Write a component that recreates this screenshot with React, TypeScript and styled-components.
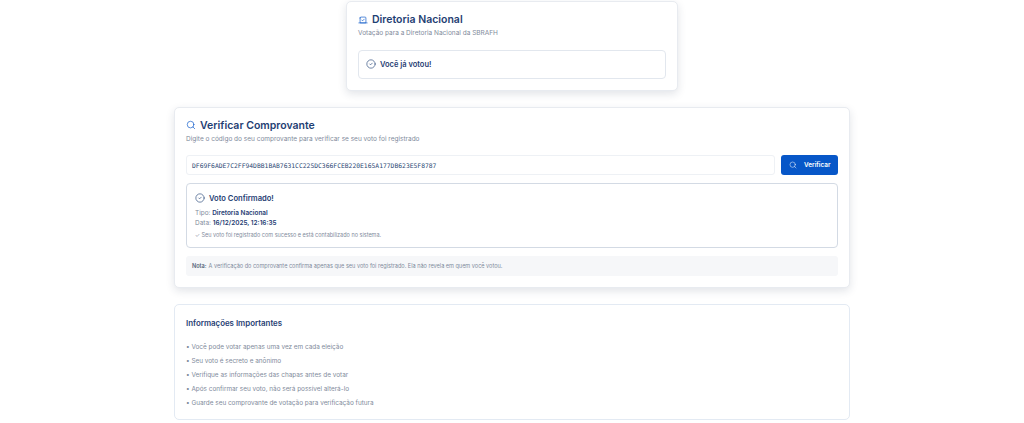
import styled, {createGlobalStyle} from "styled-components";
import {CircleCheck, Search, Vote} from "lucide-react";

const GlobalStyle = createGlobalStyle`
  html, body {
    margin: 0;
    padding: 0;
    background: #ffffff;
    font-family: Inter, "DejaVu Sans", "Liberation Sans", sans-serif;
  }
  * {
    box-sizing: border-box;
  }
`

const Page = styled.div`
  width: 1024px;
  height: 423px;
  overflow: hidden;
  padding-top: 1px;
  display: flex;
  flex-direction: column;
  align-items: center;
  gap: 16px;
`
const Card = styled.section<{$wide?: boolean; $flat?: boolean}>`
  width: ${({$wide}) => ($wide ? "676px" : "332px")};
  padding: 11px;
  background: #fff;
  border: 1px solid ${({$flat}) => ($flat ? "#e3eaf3" : "#e8ebf0")};
  border-radius: 5px;
  box-shadow: ${({$flat}) => ($flat ? "none" : "0 3px 9px rgba(30, 50, 80, 0.13)")};
`
const Title = styled.h2`
  margin: 0;
  display: flex;
  align-items: center;
  gap: 4px;
  height: 13px;
  font-size: 10.5px;
  font-weight: 600;
  color: #1f4073;
  white-space: nowrap;

  svg {
    color: #0b57c9;
    flex: none;
  }
`
const SubTitle = styled.p`
  margin: 2px 0 0;
  font-size: 6.5px;
  line-height: 10px;
  color: #7f8b9c;
`
const VotedBox = styled.div`
  margin-top: 12px;
  height: 28.5px;
  padding: 0 7px;
  display: flex;
  align-items: center;
  gap: 4px;
  border: 1px solid #e2e7ee;
  border-radius: 4px;
  font-size: 7.5px;
  font-weight: 600;
  color: #1f4073;
`
const VerifyRow = styled.div`
  margin-top: 11.5px;
  display: flex;
  gap: 6px;
`
const CodeInput = styled.div`
  flex: 1;
  height: 20px;
  padding: 0 5px;
  display: flex;
  align-items: center;
  border: 1px solid #eef1f5;
  border-radius: 3px;
  font-family: "DejaVu Sans Mono", "Liberation Mono", monospace;
  font-size: 6.35px;
  color: #2d4a75;
  white-space: nowrap;
`
const VerifyButton = styled.button`
  width: 57px;
  height: 20px;
  padding: 0 0 0 8px;
  display: flex;
  align-items: center;
  gap: 7px;
  border: 0;
  border-radius: 3px;
  background: #0757c8;
  color: #fff;
  font-family: inherit;
  font-size: 6.4px;
  font-weight: 600;
`
const ResultBox = styled.div`
  margin-top: 8px;
  height: 65px;
  padding: 8px 8px 0;
  border: 1px solid #d3dae4;
  border-radius: 4px;
`
const ResultTitle = styled.div`
  display: flex;
  align-items: center;
  gap: 4px;
  height: 12px;
  font-size: 7.6px;
  font-weight: 600;
  color: #1f4073;
`
const ResultLines = styled.div`
  margin-top: 4px;
  font-size: 6.45px;
  line-height: 10px;
  color: #7f8b9c;

  strong {
    font-weight: 600;
    color: #1f4073;
  }
`
const ResultFoot = styled.p`
  margin: 3px 0 0;
  font-size: 5.5px;
  line-height: 9px;
  color: #7f8b9c;
`
const Note = styled.div`
  margin-top: 8px;
  height: 20px;
  padding: 0 6px;
  display: flex;
  align-items: center;
  gap: 2px;
  border-radius: 3px;
  background: #f6f7f9;
  font-size: 5.55px;
  color: #7f8b9c;

  strong {
    font-weight: 600;
    color: #556478;
  }
`
const InfoTitle = styled.h3`
  margin: 0;
  font-size: 7.9px;
  line-height: 14px;
  font-weight: 600;
  color: #1f4073;
`
const InfoList = styled.ul`
  margin: 12px 0 0;
  padding: 0;
  list-style: none;
  display: flex;
  flex-direction: column;
  gap: 4px;
`
const InfoItem = styled.li`
  font-size: 6.4px;
  line-height: 10px;
  color: #7f8b9c;
`

const tips = [
    "Você pode votar apenas uma vez em cada eleição",
    "Seu voto é secreto e anônimo",
    "Verifique as informações das chapas antes de votar",
    "Após confirmar seu voto, não será possível alterá-lo",
    "Guarde seu comprovante de votação para verificação futura",
];

export default function App() {
    return (
        <>
            <GlobalStyle/>
            <Page>
                <Card>
                    <Title><Vote size={10} strokeWidth={1.6}/>Diretoria Nacional</Title>
                    <SubTitle>Votação para a Diretoria Nacional da SBRAFH</SubTitle>
                    <VotedBox><CircleCheck size={10} strokeWidth={1.5}/>Você já votou!</VotedBox>
                </Card>
                <Card $wide>
                    <Title><Search size={10} strokeWidth={1.6}/>Verificar Comprovante</Title>
                    <SubTitle>Digite o código do seu comprovante para verificar se seu voto foi registrado</SubTitle>
                    <VerifyRow>
                        <CodeInput>DF69F6ADE7C2FF94DBB1BAB7631CC225DC366FCEB220E165A177DB623E5F8787</CodeInput>
                        <VerifyButton><Search size={8} strokeWidth={1.5}/>Verificar</VerifyButton>
                    </VerifyRow>
                    <ResultBox>
                        <ResultTitle><CircleCheck size={10} strokeWidth={1.5}/>Voto Confirmado!</ResultTitle>
                        <ResultLines>
                            <div>Tipo: <strong>Diretoria Nacional</strong></div>
                            <div>Data: <strong>16/12/2025, 12:16:35</strong></div>
                        </ResultLines>
                        <ResultFoot>✓ Seu voto foi registrado com sucesso e está contabilizado no sistema.</ResultFoot>
                    </ResultBox>
                    <Note>
                        <strong>Nota:</strong> A verificação do comprovante confirma apenas que seu voto foi registrado. Ela não revela em quem você votou.
                    </Note>
                </Card>
                <Card $wide $flat>
                    <InfoTitle>Informações Importantes</InfoTitle>
                    <InfoList>
                        {tips.map(tip => <InfoItem key={tip}>• {tip}</InfoItem>)}
                    </InfoList>
                </Card>
            </Page>
        </>
    )
}
